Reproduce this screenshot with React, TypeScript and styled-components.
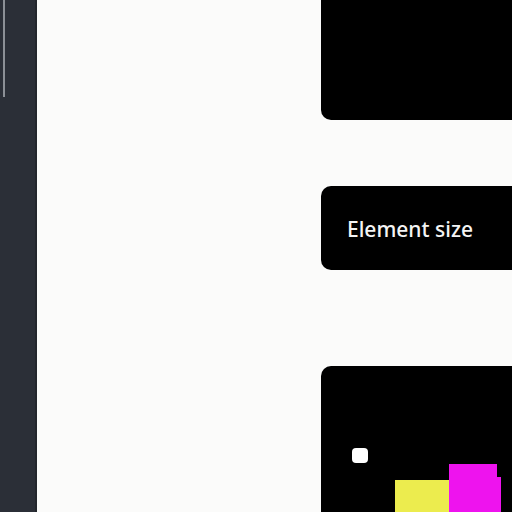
import React from 'react';
import styled, { createGlobalStyle } from 'styled-components';

const GlobalStyle = createGlobalStyle`
  html, body {
    margin: 0;
    padding: 0;
    background: #fbfbfa;
    overflow: hidden;
  }
  #root {
    height: 512px;
  }
`;

const Page = styled.div`
  display: flex;
  height: 512px;
  width: 512px;
  overflow: hidden;
  font-family: 'Noto Sans', 'Open Sans', sans-serif;
`;

const Sidebar = styled.aside`
  flex: 0 0 37px;
  background: #2b2f37;
  border-right: 2px solid #23262c;
  box-sizing: border-box;
  padding-left: 3px;
`;

const ScrollThumb = styled.div`
  width: 2px;
  height: 97px;
  background: #8c9096;
`;

const Main = styled.main`
  flex: 1;
  display: flex;
  justify-content: flex-end;
  background: #fbfbfa;
`;

const Column = styled.div`
  flex: 0 0 220px;
  margin-right: -29px;
  display: flex;
  flex-direction: column;
`;

const Card = styled.div<{ $height: number; $gap?: number }>`
  position: relative;
  flex: 0 0 ${p => p.$height}px;
  margin-top: ${p => p.$gap ?? 0}px;
  background: #000;
  border-radius: 10px;
  overflow: hidden;
`;

const LabelCard = styled(Card)`
  display: flex;
  align-items: center;
  padding-left: 26px;
`;

const Label = styled.span`
  color: #f4f4f4;
  font-size: 21px;
  font-weight: 500;
  margin-top: 1px;
`;

const Dot = styled.div`
  position: absolute;
  left: 31px;
  top: 82px;
  width: 16px;
  height: 15px;
  border-radius: 4px;
  background: #fff;
`;

const Block = styled.div<{ $color: string; $left: number; $top: number; $width: number }>`
  position: absolute;
  left: ${p => p.$left}px;
  top: ${p => p.$top}px;
  width: ${p => p.$width}px;
  bottom: 0;
  background: ${p => p.$color};
`;

const Notch = styled.div`
  position: absolute;
  right: 0;
  top: 0;
  width: 4px;
  height: 13px;
  background: #000;
`;

export default function App() {
  return (
    <>
      <GlobalStyle />
      <Page>
        <Sidebar>
          <ScrollThumb />
        </Sidebar>
        <Main>
          <Column>
            <Card $height={140} $gap={-20} />
            <LabelCard $height={84} $gap={66}>
              <Label>Element size</Label>
            </LabelCard>
            <Card $height={160} $gap={96}>
              <Dot />
              <Block $color="#ecec4e" $left={74} $top={114} $width={54} />
              <Block $color="#ee13ee" $left={128} $top={98} $width={52}>
                <Notch />
              </Block>
            </Card>
          </Column>
        </Main>
      </Page>
    </>
  );
}
